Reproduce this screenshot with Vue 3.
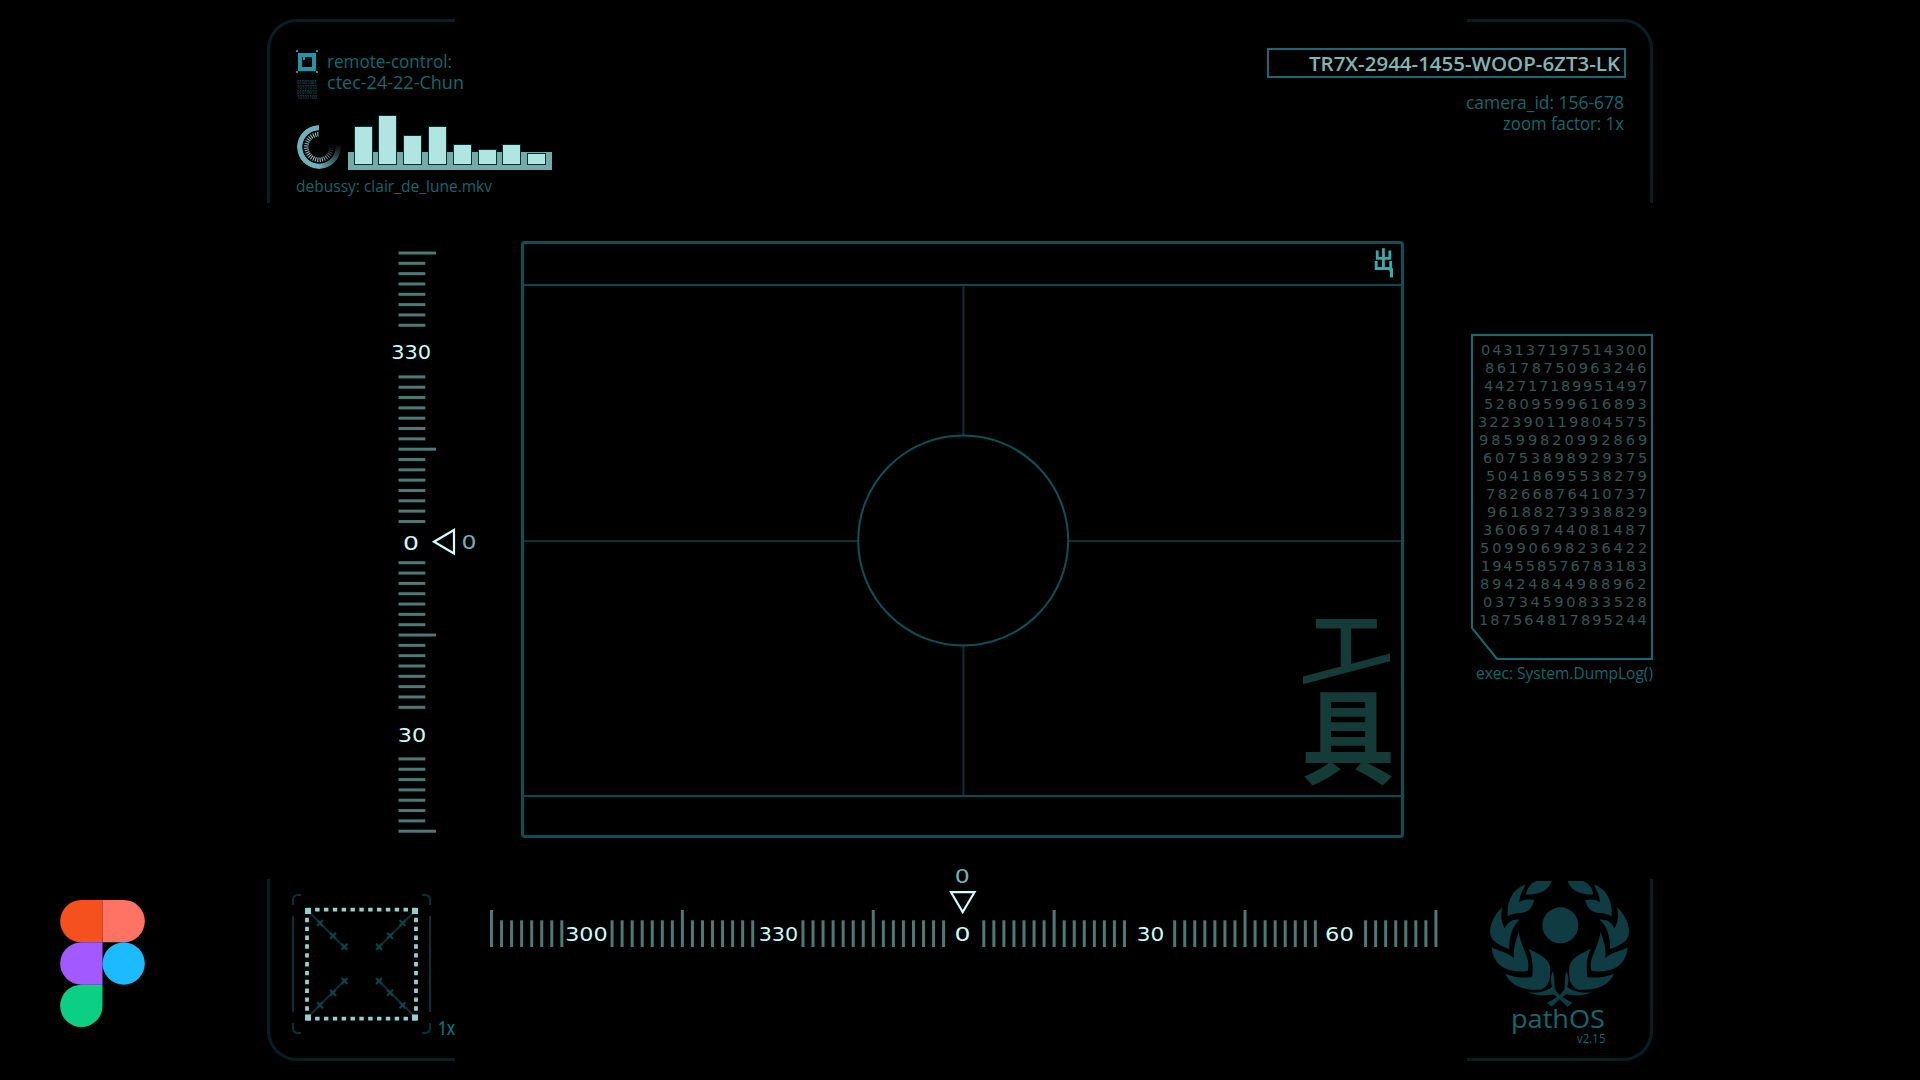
<script setup>
import { h } from 'vue'

// Single line of HUD lettering fitted to a fixed width; the box bottom is the baseline.
const HudText = (props) =>
  h('svg', { width: props.w, height: props.size, overflow: 'visible', style: { display: 'block', flex: 'none' } }, [
    h('text', {
      x: 0,
      y: props.size,
      'font-size': props.size,
      fill: 'currentColor',
      textLength: props.w,
      lengthAdjust: props.spaced ? 'spacing' : 'spacingAndGlyphs',
    }, props.text),
  ])
HudText.props = ['text', 'w', 'size', 'spaced']

const bars = [36.5, 47.5, 27.5, 36.5, 18.5, 14, 18.5, 9.5]
const bits = ['01001001', '10101010', '01010010', '10101100']

const ringTicks = Array.from({ length: 28 }, (_, i) => {
  const angle = 85 + (i * 270) / 27
  return { angle, opacity: Math.min(1, Math.max(0.08, (angle - 80) / 90)) }
})

function ticks(ranges, longOnes, step) {
  const out = []
  for (const [from, to] of ranges) {
    for (let i = from; i <= to; i++) out.push({ at: i * step, long: longOnes.includes(i) })
  }
  return out
}
const vTicks = ticks([[0, 7], [12, 26], [30, 44], [49, 56]], [0, 19, 37, 56], 10.325)
const hTicks = ticks([[0, 7], [12, 26], [31, 45], [49, 63], [68, 82], [87, 94]], [0, 19, 38, 56, 75, 94], 10.047)

const vLabels = [
  { t: '330', x: -0.8, y: 108.3, w: 40 },
  { t: '0', x: 11, y: 298.8, w: 16 },
  { t: '30', x: 5.7, y: 491, w: 28.5 },
]
const hLabels = [
  { t: '300', x: 75.2, w: 42.5 },
  { t: '330', x: 268.7, w: 39.5 },
  { t: '0', x: 464.5, w: 16 },
  { t: '30', x: 646.7, w: 27.5 },
  { t: '60', x: 835, w: 28.8 },
]

const dump = [
  ['043137197514300', 163], ['86178750963246', 159], ['442717189951497', 160.7], ['52809599616893', 160.3],
  ['322390119804575', 166], ['98599820992869', 165.7], ['60753898929375', 161.7], ['50418695538279', 158.3],
  ['78266876410737', 158], ['96188273938829', 157.7], ['36069744081487', 161], ['50990698236422', 164.7],
  ['194558576783183', 163.3], ['89424844988962', 164], ['03734590833528', 161.3], ['187564817895244', 165.3],
]

const crosses = [
  [28, 29], [41, 41.7], [52.5, 52.7], [110.5, 29], [98, 41.7], [87, 52.7],
  [28, 111.3], [41, 98.7], [52.5, 87], [110.5, 111.3], [98, 98.7], [87, 87],
]
</script>

<template>
  <div class="screen">
    <aside class="brand">
      <svg width="85" height="127" viewBox="0 0 200 300">
        <path d="M50 0h50v100H50A50 50 0 0 1 50 0z" fill="#f4511e" />
        <path d="M100 0h50a50 50 0 0 1 0 100h-50z" fill="#ff7364" />
        <path d="M50 100h50v100H50a50 50 0 0 1 0-100z" fill="#a259ff" />
        <circle cx="150" cy="150" r="50" fill="#1cbbff" />
        <path d="M50 200h50v50a50 50 0 1 1-50-50z" fill="#0bcf83" />
      </svg>
    </aside>

    <main class="hud">
      <section class="row top">
        <div class="corner tl">
          <div class="identity">
            <svg width="22" height="50">
              <g fill="#1f97a3">
                <path d="M2 3h18v18H2zM6 7v10h10V7z" fill-rule="evenodd" />
                <path d="M0 0h2v2H0zM20 0h2v2h-2zM0 21h2v2H0zM20 21h2v2h-2zM7 7h2v3H7z" />
              </g>
              <text v-for="(b, i) in bits" :key="i" x="1" :y="33.8 + i * 5" font-size="4.8" textLength="20" lengthAdjust="spacingAndGlyphs" fill="#1f7a84">{{ b }}</text>
            </svg>
            <div class="lines">
              <HudText text="remote-control:" :w="125" :size="18" />
              <HudText text="ctec-24-22-Chun" :w="137" :size="18" />
            </div>
          </div>
          <div class="music">
            <div class="ring">
              <svg width="44" height="44" viewBox="-22 -22 44 44">
                <line v-for="t in ringTicks" :key="t.angle" x1="0" y1="-10.5" x2="0" y2="-15" stroke="#9fd0d3" stroke-width="1" :opacity="t.opacity" :transform="`rotate(${t.angle})`" />
              </svg>
            </div>
            <div class="chart">
              <span v-for="(b, i) in bars" :key="i" class="bar" :style="{ height: b + 'px' }"></span>
            </div>
          </div>
          <HudText class="track" text="debussy: clair_de_lune.mkv" :w="196" :size="16" />
        </div>

        <div class="corner tr">
          <div class="serial">
            <HudText text="TR7X-2944-1455-WOOP-6ZT3-LK" :w="311" :size="20" />
          </div>
          <div class="camera">
            <HudText text="camera_id: 156-678" :w="158" :size="17.5" />
            <HudText text="zoom factor: 1x" :w="121" :size="17.5" />
          </div>
        </div>
      </section>

      <section class="row middle">
        <svg class="vruler" width="84" height="584">
          <rect v-for="t in vTicks" :key="t.at" x="6.5" :y="t.at + 0.5" :width="t.long ? 37.5 : 26.8" height="3" fill="#4d7a77" />
          <text v-for="l in vLabels" :key="l.t" class="num" :x="l.x" :y="l.y" :textLength="l.w" lengthAdjust="spacingAndGlyphs">{{ l.t }}</text>
          <path d="M42 290.7 62 279v23.5z" fill="none" stroke="#d2fffb" stroke-width="2.2" />
          <text class="num dim" x="69.500" y="297.8" textLength="15" lengthAdjust="spacingAndGlyphs">0</text>
        </svg>

        <div class="viewport">
          <header><span class="exit">出</span></header>
          <div class="scene">
            <svg width="877" height="509">
              <path d="M0 255h334M544 255H877M439.500 0v149.500M439.500 360V509" stroke="#0a2f35" stroke-width="2" />
              <circle cx="439.200" cy="254.500" r="105" fill="none" stroke="#0f5057" stroke-width="2" />
            </svg>
            <svg class="tool" width="92" height="170">
              <defs>
                <clipPath id="stem"><rect width="92" height="50" /></clipPath>
              </defs>
              <g clip-path="url(#stem)">
                <text x="6.200" y="59.500" font-size="76">工</text>
              </g>
              <path d="M1 60.500 88 37.500v7.800L1 68.300z" />
              <text transform="translate(-0.500 160) scale(1.010 1.120)" font-size="92">具</text>
            </svg>
          </div>
          <footer></footer>
        </div>

        <div class="log">
          <div class="dump">
            <svg class="outline" width="182" height="326">
              <path d="M1 1h180v324H26L1 294z" fill="none" stroke="#166870" stroke-width="2" />
            </svg>
            <HudText v-for="d in dump" :key="d[0]" class="digits" :text="d[0]" :w="d[1] + 2.5" :size="14.6" :spaced="true" />
          </div>
          <HudText class="exec" text="exec: System.DumpLog()" :w="177" :size="15.5" />
        </div>
      </section>

      <section class="row bottom">
        <div class="corner bl">
          <svg width="139" height="140">
            <g fill="none" stroke="#0a2f35" stroke-width="2">
              <path d="M1 11V6q0-5 5-5h3M130 1h3q5 0 5 5v5M138 129v5q0 5-5 5h-3M9 139H6q-5 0-5-5v-5M1 22v96M138 22v96" />
              <path d="M17 18l37 37M122 18L85 55M17 122l37-37M122 122L85 85" />
              <path v-for="c in crosses" :key="c.join()" :d="`M${c[0] - 3} ${c[1] - 3}l6 6m0-6l-6 6`" stroke="#0d434a" stroke-width="2" />
            </g>
            <g fill="none" stroke="#93d0cd" stroke-width="3.8" stroke-dasharray="4.42 4.42">
              <path d="M14.300 15.700H125M14.300 124.700H125M15 15v110M124 15v110" />
            </g>
            <path d="M13 14h6v6h-6zM120 14h6v6h-6zM13 120.500h6v6h-6zM120 120.500h6v6h-6z" fill="#93d0cd" />
          </svg>
          <HudText class="factor" text="1x" :w="17" :size="19" />
        </div>

        <svg class="hruler" width="948" height="80">
          <rect v-for="t in hTicks" :key="t.at" :x="t.at" :y="t.long ? 42 : 52.3" width="3" :height="t.long ? 37 : 26.700" fill="#4d7a77" />
          <text v-for="l in hLabels" :key="l.t" class="num" :x="l.x" y="72.700" :textLength="l.w" lengthAdjust="spacingAndGlyphs">{{ l.t }}</text>
          <path d="M461 24.200h23.500L472.700 44z" fill="none" stroke="#d2fffb" stroke-width="2.2" />
          <text class="num dim" x="464.800" y="15" textLength="15" lengthAdjust="spacingAndGlyphs">0</text>
        </svg>

        <div class="corner br">
          <svg width="146.700" height="130" viewBox="80 30 440 390" fill="#0f3c42">
            <circle cx="300" cy="166" r="54" />
            <g v-for="side in ['', 'translate(596 0) scale(-1 1)']" :key="side" :transform="side">
              <path d="M274 33H228C208 42 200 55 197 73C215 76 240 70 253 61C263 54 270 44 274 33Z" />
              <path d="M195 43C190 60 178 72 177 97C190 87 207 88 222 90C213 120 200 127 180 129C165 130 152 132 142 139C140 100 150 62 195 43Z" />
              <path d="M127 110C90 145 80 190 100 212C115 225 130 230 147 237C146 200 155 170 178 149C160 146 142 155 133 175C122 155 120 132 127 110Z" />
              <path d="M94 232C98 275 125 312 202 303C213 265 184 240 175 185C168 210 158 230 161 265C140 245 115 245 94 232Z" />
              <path d="M135 311C150 345 185 362 240 359C265 352 272 330 269 288C262 262 235 252 205 236C217 262 219 290 215 321C195 325 160 322 135 311Z" />
              <path d="M203 367C240 370 260 362 275 350C269 335 272 318 277 303C284 320 281 340 284 356C290 372 310 385 336 398L322 410C305 395 290 378 277 373C255 378 225 378 203 367Z" />
            </g>
          </svg>
          <HudText class="os" text="pathOS" :w="94" :size="26" />
          <HudText class="version" text="v2.15" :w="28.500" :size="13.500" />
        </div>
      </section>
    </main>
  </div>
</template>

<style>
body {
  margin: 0;
  background: #000;
}
</style>

<style scoped>
.screen {
  display: flex;
  width: 1920px;
  height: 1080px;
  box-sizing: border-box;
  overflow: hidden;
  background: #000;
  color: #17666e;
  font-family: "Open Sans", "Noto Sans", "Noto Sans CJK SC", sans-serif;
}
svg {
  display: block;
  flex: none;
  overflow: visible;
}
.brand {
  box-sizing: border-box;
  width: 267px;
  padding: 900.300px 0 0 60.300px;
  flex: none;
}
.hud {
  width: 1386px;
  height: 1042px;
  margin-top: 19px;
  display: grid;
  grid-template-rows: 184px 676px 182px;
}
.row {
  display: flex;
  align-items: flex-start;
}
.top {
  justify-content: space-between;
}
.corner {
  box-sizing: border-box;
  height: 100%;
  border: 0 solid #052022;
  flex: none;
}
.tl {
  width: 188px;
  border-width: 3px 0 0 3px;
  border-top-left-radius: 30px;
  padding: 28px 0 0 26px;
}
.tr {
  width: 186px;
  border-width: 3px 3px 0 0;
  border-top-right-radius: 30px;
  padding: 26px 24px 0 0;
  display: flex;
  flex-direction: column;
  align-items: flex-end;
}
.bl {
  width: 188px;
  border-width: 0 0 3px 3px;
  border-bottom-left-radius: 30px;
  padding: 15px 0 0 22px;
  display: flex;
}
.br {
  width: 186px;
  border-width: 0 3px 3px 0;
  border-bottom-right-radius: 30px;
  padding: 1px 0 0 19.700px;
}
.identity {
  display: flex;
  gap: 9px;
}
.lines {
  display: flex;
  flex-direction: column;
  gap: 3.300px;
}
.music {
  display: flex;
  align-items: flex-end;
  width: 256px;
  gap: 7px;
  margin-top: 16px;
}
.ring {
  position: relative;
  width: 44px;
  height: 44px;
  margin: 0 0 1px 1px;
  flex: none;
}
.ring::before {
  content: "";
  position: absolute;
  inset: 0;
  border-radius: 50%;
  background: conic-gradient(transparent 0 80deg, #6cb2ba 180deg 360deg);
  mask: radial-gradient(circle, transparent 16.300px, #000 17px);
}
.chart {
  box-sizing: border-box;
  width: 204px;
  height: 54px;
  padding: 0 5.700px 5.500px;
  display: flex;
  align-items: flex-end;
  justify-content: space-between;
  background: linear-gradient(#74aba8, #74aba8) bottom / 100% 18px no-repeat;
  flex: none;
}
.bar {
  box-sizing: content-box;
  width: 17px;
  background: #b1e5e2;
  border: 1px solid #08302f;
}
.track {
  margin-top: 6px;
}
.serial {
  box-sizing: border-box;
  width: 359px;
  height: 30px;
  border: 2px solid #1a6870;
  padding: 1px 4.500px 0 0;
  display: flex;
  justify-content: flex-end;
  color: #82b5b4;
  font-weight: 600;
  flex: none;
}
.camera {
  display: flex;
  flex-direction: column;
  align-items: flex-end;
  gap: 3.800px;
  margin: 13.200px 2px 0 0;
}
.vruler {
  margin: 48px 0 0 125px;
}
.num {
  font-family: "DejaVu Sans", sans-serif;
  font-size: 20.300px;
  fill: #cdfbf7;
}
.dim {
  fill: #74b0b2;
}
.viewport {
  box-sizing: border-box;
  width: 883px;
  height: 597px;
  margin: 38px 0 0 45px;
  border: 3px solid #0f5057;
  border-radius: 4px;
  display: flex;
  flex-direction: column;
  flex: none;
}
.viewport header {
  box-sizing: border-box;
  height: 42px;
  border-bottom: 2px solid #0e484f;
  display: flex;
  justify-content: flex-end;
  padding: 0 7px 0 0;
}
.exit {
  position: relative;
  height: 30px;
  font: 700 21px/30px "Noto Sans CJK SC", sans-serif;
  color: #38aaa8;
  transform: scaleY(1.150);
}
.exit::after {
  content: "";
  position: absolute;
  right: 1.500px;
  bottom: -0.500px;
  width: 2.800px;
  height: 8px;
  background: #38aaa8;
}
.scene {
  position: relative;
  height: 509px;
}
.viewport footer {
  box-sizing: border-box;
  height: 40px;
  border-top: 2px solid #0e484f;
}
.tool {
  position: absolute;
  right: 7px;
  top: 330px;
  fill: #153b39;
  font-family: "Noto Sans CJK SC", sans-serif;
  font-weight: 700;
}
.log {
  margin: 131px 0 0 67px;
  display: flex;
  flex-direction: column;
  align-items: flex-end;
}
.dump {
  position: relative;
  box-sizing: border-box;
  width: 182px;
  height: 326px;
  padding: 6.400px 5px 0 0;
  display: flex;
  flex-direction: column;
  align-items: flex-end;
  gap: 3.400px;
  color: #325654;
}
.digits {
  font-family: "DejaVu Sans", sans-serif;
  margin-right: 1.200px;
}
.outline {
  position: absolute;
  left: 0;
  top: 0;
}
.exec {
  margin-top: 3px;
}
.factor {
  margin: 121.700px 0 0 7px;
  font-weight: 600;
}
.hruler {
  margin: -11px 29px 0 35px;
}
.os {
  margin: -8px 0 0 24.500px;
}
.version {
  margin: 1.300px 0 0 90px;
}
</style>
